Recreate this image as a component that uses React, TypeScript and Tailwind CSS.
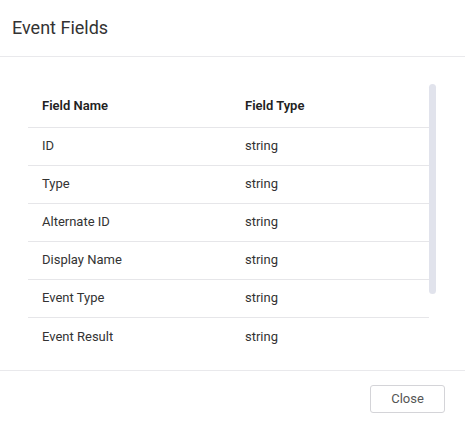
const fields = [
  { name: 'ID', type: 'string' },
  { name: 'Type', type: 'string' },
  { name: 'Alternate ID', type: 'string' },
  { name: 'Display Name', type: 'string' },
  { name: 'Event Type', type: 'string' },
  { name: 'Event Result', type: 'string' },
]

export default function App() {
  return (
    <div className="w-[465px] h-[425px] bg-white flex flex-col font-['Roboto',sans-serif] text-[#333]">
      <div className="h-[57px] border-b border-[#e9e9ec] flex items-center px-3 shrink-0">
        <h2 className="text-[18px] font-normal text-[#333] -mt-[1px]">Event Fields</h2>
      </div>
      <div className="flex-1 flex pt-[27px] pb-[16px] pl-[28px] pr-[29px] min-h-0">
        <div className="flex-1 h-[270px] overflow-hidden">
          <table className="w-full border-collapse text-[13px]">
            <thead>
              <tr className="h-[43px] border-b border-[#e6e6e9]">
                <th className="text-left font-semibold text-[#222] pl-[14px] w-[217px]">Field Name</th>
                <th className="text-left font-semibold text-[#222]">Field Type</th>
              </tr>
            </thead>
            <tbody>
              {fields.map((f) => (
                <tr key={f.name} className="h-[38px] border-b border-[#e6e6e9] last:border-b-0">
                  <td className="pl-[14px]">{f.name}</td>
                  <td>{f.type}</td>
                </tr>
              ))}
            </tbody>
          </table>
        </div>
        <div className="w-[7px] h-[270px]">
          <div className="h-[210px] bg-[#e1e3ec] rounded-full" />
        </div>
      </div>
      <div className="h-[55px] border-t border-[#e9e9ec] flex items-start justify-end pr-[20px] pt-[14px] shrink-0">
        <button className="w-[75px] h-[28px] border border-[#d4d4d8] rounded-[3px] text-[13px] text-[#555] bg-white">
          Close
        </button>
      </div>
    </div>
  )
}
